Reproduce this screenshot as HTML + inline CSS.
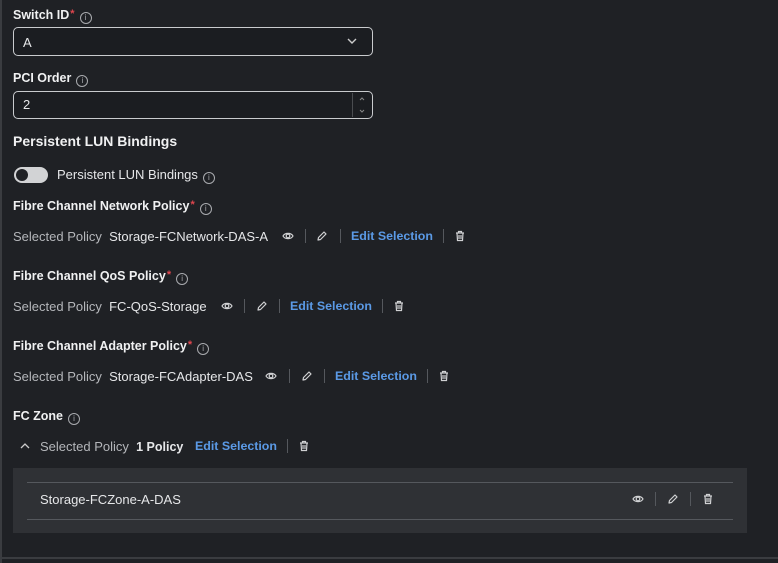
<!DOCTYPE html>
<html><head><style>
*{margin:0;padding:0;box-sizing:border-box}
body{width:778px;height:563px;background:#1f2125;font-family:"Liberation Sans",sans-serif;color:#e6e7e9;position:relative;overflow:hidden;font-size:13px}
.a{position:absolute;white-space:nowrap}
.b{font-weight:bold;font-size:12.5px;color:#f0f1f2}
.req{color:#e0464e;font-size:11px;vertical-align:top;margin-left:1px}
.i{display:inline-block;width:12px;height:12px;border:1px solid #a9abaf;border-radius:50%;font-size:8px;line-height:10px;text-align:center;color:#a9abaf;margin-left:5px;vertical-align:-1px;font-weight:normal}
.g{color:#b4b6ba}
.l{color:#5b9ae6;font-weight:bold;font-size:12.4px}
.sep{position:absolute;width:1px;height:14px;background:#55585d}
.box{position:absolute;border:1.5px solid #c9cbce;border-radius:5px;background:#1b1d21}
svg.ic{position:absolute}
</style></head><body>
<svg width="0" height="0" style="position:absolute"><defs>
<g id="eye"><path d="M1 6C3 2.5 9 2.5 11 6C9 9.5 3 9.5 1 6Z" fill="none" stroke="#d0d1d3" stroke-width="1.2"/><circle cx="6" cy="6" r="1.8" fill="none" stroke="#d0d1d3" stroke-width="1.2"/></g>
<g id="pen"><path d="M2 10L2.5 7.5L8 2L10 4L4.5 9.5Z" fill="none" stroke="#d0d1d3" stroke-width="1.2" stroke-linejoin="round"/></g>
<g id="tr"><path d="M2 3H10M4.5 3V1.5H7.5V3M3 3L3.5 10.5H8.5L9 3M5 5V9M7 5V9" fill="none" stroke="#d0d1d3" stroke-width="1.2"/></g>
</defs></svg>
<div style="position:absolute;left:0;top:0;width:2px;height:563px;background:#3a3c40"></div>
<div style="position:absolute;left:0;top:557px;width:778px;height:2px;background:#3a3c40"></div>
<div class="a b" style="left:13px;top:8px">Switch ID<span class="req">*</span><span class="i">i</span></div>
<div class="box" style="left:13px;top:27px;width:360px;height:29px"></div>
<div class="a" style="left:23px;top:35px">A</div>
<svg class="ic" style="left:347px;top:37px" width="10" height="8"><path d="M1 2l4 4 4-4" stroke="#ccc" fill="none" stroke-width="1.4"/></svg>
<div class="a b" style="left:13px;top:71px">PCI Order<span class="i">i</span></div>
<div class="box" style="left:13px;top:91px;width:360px;height:28px"></div>
<div style="position:absolute;left:352px;top:93px;width:1px;height:24px;background:#4a4c50"></div>
<div class="a" style="left:23px;top:97px">2</div>
<svg class="ic" style="left:358px;top:95px" width="8" height="20"><path d="M2 5l2-2 2 2M2 15l2 2 2-2" stroke="#888" fill="none"/></svg>
<div class="a b" style="left:13px;top:133px;font-size:14px">Persistent LUN Bindings</div>
<div style="position:absolute;left:14px;top:167px;width:34px;height:16px;border-radius:8px;background:#d2d3d5"></div>
<div style="position:absolute;left:16px;top:169px;width:12px;height:12px;border-radius:50%;background:#1f2125"></div>
<div class="a" style="left:57px;top:167px">Persistent LUN Bindings<span class="i">i</span></div>

<div class="a b" style="left:13px;top:199px">Fibre Channel Network Policy<span class="req">*</span><span class="i">i</span></div>
<div class="a" style="left:13px;top:229px"><span class="g">Selected Policy</span>&nbsp; Storage-FCNetwork-DAS-A</div>
<svg class="ic" style="left:282px;top:230px" width="12" height="12"><use href="#eye"/></svg>
<div class="sep" style="left:305px;top:229px"></div>
<svg class="ic" style="left:316px;top:230px" width="12" height="12"><use href="#pen"/></svg>
<div class="sep" style="left:340px;top:229px"></div>
<div class="a l" style="left:351px;top:229px">Edit Selection</div>
<div class="sep" style="left:443px;top:229px"></div>
<svg class="ic" style="left:454px;top:230px" width="12" height="12"><use href="#tr"/></svg>

<div class="a b" style="left:13px;top:269px">Fibre Channel QoS Policy<span class="req">*</span><span class="i">i</span></div>
<div class="a" style="left:13px;top:299px"><span class="g">Selected Policy</span>&nbsp; FC-QoS-Storage</div>
<svg class="ic" style="left:221px;top:300px" width="12" height="12"><use href="#eye"/></svg>
<div class="sep" style="left:244px;top:299px"></div>
<svg class="ic" style="left:256px;top:300px" width="12" height="12"><use href="#pen"/></svg>
<div class="sep" style="left:279px;top:299px"></div>
<div class="a l" style="left:290px;top:299px">Edit Selection</div>
<div class="sep" style="left:382px;top:299px"></div>
<svg class="ic" style="left:393px;top:300px" width="12" height="12"><use href="#tr"/></svg>

<div class="a b" style="left:13px;top:339px">Fibre Channel Adapter Policy<span class="req">*</span><span class="i">i</span></div>
<div class="a" style="left:13px;top:369px"><span class="g">Selected Policy</span>&nbsp; Storage-FCAdapter-DAS</div>
<svg class="ic" style="left:265px;top:370px" width="12" height="12"><use href="#eye"/></svg>
<div class="sep" style="left:289px;top:369px"></div>
<svg class="ic" style="left:301px;top:370px" width="12" height="12"><use href="#pen"/></svg>
<div class="sep" style="left:324px;top:369px"></div>
<div class="a l" style="left:335px;top:369px">Edit Selection</div>
<div class="sep" style="left:427px;top:369px"></div>
<svg class="ic" style="left:438px;top:370px" width="12" height="12"><use href="#tr"/></svg>

<div class="a b" style="left:13px;top:409px">FC Zone<span class="i">i</span></div>
<svg class="ic" style="left:20px;top:442px" width="10" height="8"><path d="M1 6l4-4 4 4" stroke="#ccc" fill="none" stroke-width="1.3"/></svg>
<div class="a" style="left:40px;top:439px"><span class="g">Selected Policy</span>&nbsp; <b style="font-size:12.5px">1 Policy</b></div>
<div class="a l" style="left:195px;top:439px">Edit Selection</div>
<div class="sep" style="left:287px;top:439px"></div>
<svg class="ic" style="left:298px;top:440px" width="12" height="12"><use href="#tr"/></svg>

<div style="position:absolute;left:13px;top:468px;width:734px;height:65px;background:#2f3135"></div>
<div style="position:absolute;left:27px;top:482px;width:706px;height:1px;background:#55585d"></div>
<div style="position:absolute;left:27px;top:519px;width:706px;height:1px;background:#55585d"></div>
<div class="a" style="left:40px;top:492px">Storage-FCZone-A-DAS</div>
<svg class="ic" style="left:632px;top:493px" width="12" height="12"><use href="#eye"/></svg>
<div class="sep" style="left:655px;top:492px"></div>
<svg class="ic" style="left:667px;top:493px" width="12" height="12"><use href="#pen"/></svg>
<div class="sep" style="left:690px;top:492px"></div>
<svg class="ic" style="left:702px;top:493px" width="12" height="12"><use href="#tr"/></svg>
</body></html>
